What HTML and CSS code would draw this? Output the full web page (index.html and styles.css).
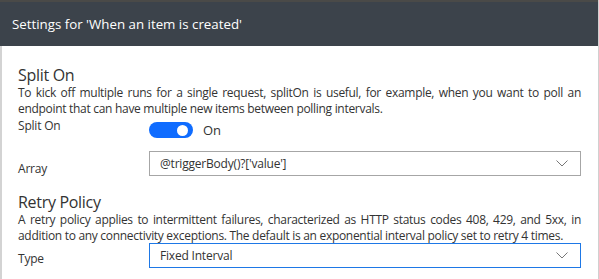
FILE: index.html
```html
<!DOCTYPE html>
<html>
<head>
  <title>Settings</title>
  <link rel="stylesheet" href="styles.css">
</head>
<body>
  <div class="panel">
    <div class="panel-header">Settings for 'When an item is created'</div>
    <div class="panel-body">
      <section class="group">
        <h2>Split On</h2>
        <p class="desc">To kick off multiple runs for a single request, splitOn is useful, for example, when you want to poll an endpoint that can have multiple new items between polling intervals.</p>
        <div class="row row-toggle">
          <label class="field-label">Split On</label>
          <div class="toggle-wrap">
            <span class="toggle"><span class="knob"></span></span>
            <span class="toggle-text">On</span>
          </div>
        </div>
        <div class="row row-select row-array">
          <label class="field-label">Array</label>
          <div class="select">
            <span>@triggerBody()?['value']</span>
            <svg class="chevron" viewBox="0 0 12 7" width="12" height="7"><path d="M0.5 0.5 L6 6 L11.5 0.5" fill="none" stroke="#777" stroke-width="1"/></svg>
          </div>
        </div>
      </section>
      <section class="group">
        <h2>Retry Policy</h2>
        <p class="desc">A retry policy applies to intermittent failures, characterized as HTTP status codes 408, 429, and 5xx, in addition to any connectivity exceptions. The default is an exponential interval policy set to retry 4 times.</p>
        <div class="row row-select row-type">
          <label class="field-label">Type</label>
          <div class="select focused">
            <span>Fixed Interval</span>
            <svg class="chevron" viewBox="0 0 12 7" width="12" height="7"><path d="M0.5 0.5 L6 6 L11.5 0.5" fill="none" stroke="#777" stroke-width="1"/></svg>
          </div>
        </div>
      </section>
    </div>
  </div>
</body>
</html>
```

FILE: styles.css
```css
body {
  margin: 0;
  font-family: "Open Sans", sans-serif;
  color: #333;
  background: #fff;
}
.panel {
  width: 598px;
  height: 279px;
  border-right: 1px solid #d0d0d0;
  overflow: hidden;
}
.panel-header {
  background: #3c434b;
  border-top: 2px solid #4a4a48;
  color: #fff;
  font-size: 13.3px;
  height: 44px;
  line-height: 44px;
  padding-left: 12px;
}
.panel-body {
  border-left: 2px solid #d3d3d3;
  padding: 19px 17px 0 16px;
  height: 300px;
}
h2 {
  font-size: 16px;
  font-weight: 400;
  letter-spacing: -0.3px;
  margin: 0;
  line-height: 20px;
  color: #333;
}
.desc {
  margin: 0;
  font-size: 12px;
  letter-spacing: -0.3px;
  line-height: 16px;
  text-align: justify;
  color: #333;
}
.row {
  display: flex;
  align-items: flex-start;
}
.field-label {
  width: 131px;
  font-size: 12px;
  letter-spacing: -0.2px;
  line-height: 16px;
  flex: none;
}
.row-toggle {
  margin-top: 1px;
}
.toggle-wrap {
  display: flex;
  align-items: center;
  gap: 10px;
  margin-top: 4px;
  height: 16px;
}
.toggle {
  display: flex;
  align-items: center;
  justify-content: flex-end;
  width: 44px;
  height: 16px;
  border-radius: 8px;
  background: #0f6cff;
  padding-right: 5px;
  box-sizing: border-box;
}
.knob {
  width: 11px;
  height: 11px;
  border-radius: 50%;
  background: #fff;
}
.toggle-text {
  font-size: 13px;
}
.row-array {
  margin-top: 13px;
}
.row-array .field-label {
  padding-top: 10px;
}
.row-type {
  margin-top: -1px;
}
.row-type .field-label {
  padding-top: 8px;
}
.select {
  width: 432px;
  height: 25px;
  box-sizing: border-box;
  border: 1px solid #a6a6a6;
  display: flex;
  align-items: center;
  justify-content: space-between;
  padding: 0 12px 0 10px;
  font-size: 12px;
  letter-spacing: -0.2px;
}
.select.focused {
  border-color: #1e78e6;
}
.group + .group {
  margin-top: 15px;
}
```
